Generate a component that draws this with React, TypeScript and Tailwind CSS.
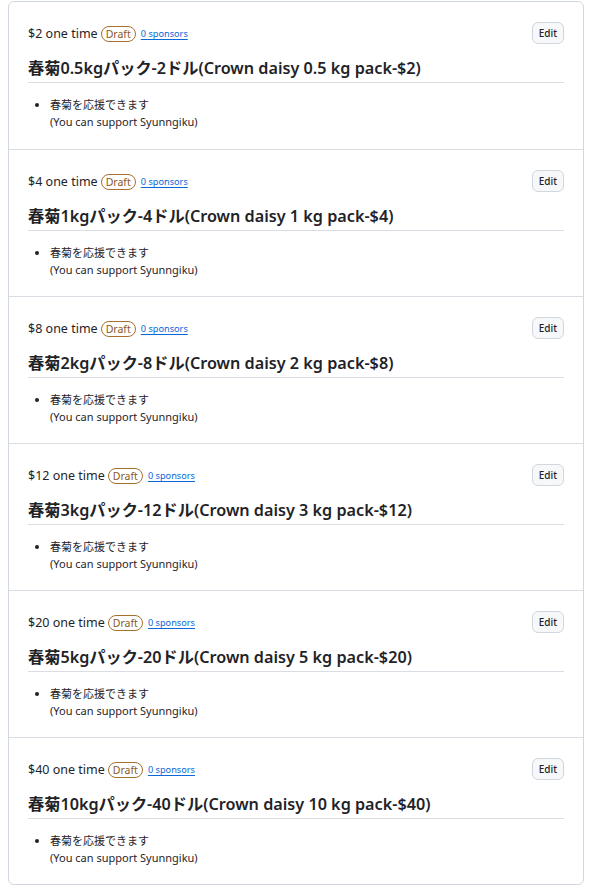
import React from 'react'

interface Tier {
  price: number
  kg: string
}

const tiers: Tier[] = [
  { price: 2, kg: '0.5' },
  { price: 4, kg: '1' },
  { price: 8, kg: '2' },
  { price: 12, kg: '3' },
  { price: 20, kg: '5' },
  { price: 40, kg: '10' },
]

export default function App() {
  return (
    <div
      className="bg-white pt-px pb-[5px] pl-2 pr-[6px] text-[#1f2328]"
      style={{ fontFamily: '"Noto Sans", "Noto Sans CJK JP", sans-serif' }}
    >
      <div className="border border-[#d0d7de] rounded-md">
        {tiers.map((tier, i) => (
          <div
            key={tier.price}
            className={`h-[147px] px-[19px] pt-[23px] ${i > 0 ? 'border-t border-[#d8dee4]' : ''}`}
          >
            <div className="flex items-start justify-between">
              <div className="flex items-center h-[18px] text-[12.5px]">
                <span>${tier.price} one time</span>
                <span className="ml-[3px] px-[4px] h-[16px] leading-[14px] rounded-full border border-[#a8702e] text-[#8a5a1e] text-[10.5px]">
                  Draft
                </span>
                <a href="#" className="ml-[5px] text-[9.2px] text-[#0969da] underline underline-offset-2">
                  0 sponsors
                </a>
              </div>
              <button className="h-[22px] px-[6px] text-[10px] font-medium rounded-md border border-[#d0d7de] bg-[#f6f8fa] text-[#1f2328] -mt-[3px]">
                Edit
              </button>
            </div>
            <h3 className="mt-[12px] text-[16.2px] font-semibold leading-6 pb-[2px] border-b border-[#d8dee4]">
              春菊{tier.kg}kgパック-{tier.price}ドル(Crown daisy {tier.kg} kg pack-${tier.price})
            </h3>
            <ul className="mt-[13px] pl-[22px] list-disc text-[11px] leading-[17px] text-[#1f2328]">
              <li>
                春菊を応援できます
                <br />
                (You can support Syunngiku)
              </li>
            </ul>
          </div>
        ))}
      </div>
    </div>
  )
}
